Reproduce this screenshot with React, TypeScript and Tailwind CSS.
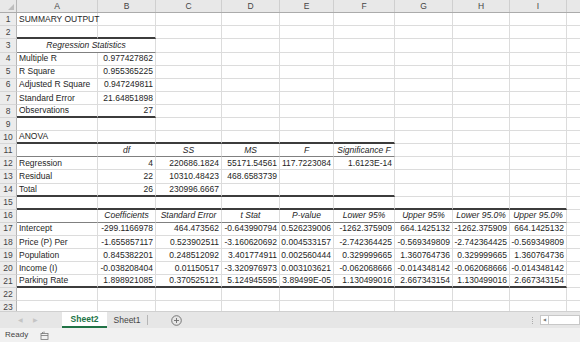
type Line = "thick" | "thin";

interface RowDef {
    cells: string[];
    hdr?: boolean;
    merge?: boolean;
    line?: [Line, number];
}

const colW = ["w-[81px]", "w-[58px]", "w-[66px]", "w-[58px]", "w-[54px]", "w-[61px]", "w-[58px]", "w-[57px]", "w-[57px]"];
const letters = ["A", "B", "C", "D", "E", "F", "G", "H", "I"];

const rows: RowDef[] = [
    { cells: ["SUMMARY OUTPUT"] },
    { cells: [], line: ["thick", 2] },
    { cells: ["Regression Statistics"], hdr: true, merge: true, line: ["thin", 2] },
    { cells: ["Multiple R", "0.977427862"] },
    { cells: ["R Square", "0.955365225"] },
    { cells: ["Adjusted R Square", "0.947249811"] },
    { cells: ["Standard Error", "21.64851898"] },
    { cells: ["Observations", "27"], line: ["thick", 2] },
    { cells: [] },
    { cells: ["ANOVA"], line: ["thick", 6] },
    { cells: ["", "df", "SS", "MS", "F", "Significance F"], hdr: true, line: ["thin", 6] },
    { cells: ["Regression", "4", "220686.1824", "55171.54561", "117.7223084", "1.6123E-14"] },
    { cells: ["Residual", "22", "10310.48423", "468.6583739"] },
    { cells: ["Total", "26", "230996.6667"], line: ["thick", 6] },
    { cells: [], line: ["thick", 9] },
    { cells: ["", "Coefficients", "Standard Error", "t Stat", "P-value", "Lower 95%", "Upper 95%", "Lower 95.0%", "Upper 95.0%"], hdr: true, line: ["thin", 9] },
    { cells: ["Intercept", "-299.1166978", "464.473562", "-0.643990794", "0.526239006", "-1262.375909", "664.1425132", "-1262.375909", "664.1425132"] },
    { cells: ["Price (P) Per", "-1.655857117", "0.523902511", "-3.160620692", "0.004533157", "-2.742364425", "-0.569349809", "-2.742364425", "-0.569349809"] },
    { cells: ["Population", "0.845382201", "0.248512092", "3.401774911", "0.002560444", "0.329999665", "1.360764736", "0.329999665", "1.360764736"] },
    { cells: ["Income (I)", "-0.038208404", "0.01150517", "-3.320976973", "0.003103621", "-0.062068666", "-0.014348142", "-0.062068666", "-0.014348142"] },
    { cells: ["Parking Rate", "1.898921085", "0.370525121", "5.124945595", "3.89499E-05", "1.130499016", "2.667343154", "1.130499016", "2.667343154"], line: ["thick", 9] },
    { cells: [] },
    { cells: [] },
];

function bottom(row: RowDef, i: number) {
    if (row.line && i < row.line[1]) {
        return row.line[0] === "thick" ? "border-b-2 border-b-[#3c3c3c]" : "border-b border-b-[#808080]";
    }
    return "border-b border-b-[#dcdcdc]";
}

function Cell({ row, i }: { row: RowDef; i: number }) {
    const text = row.cells[i] ?? "";
    const align = row.hdr ? "justify-center italic" : i === 0 ? "justify-start" : "justify-end";
    return (
        <div className={`${colW[i]} shrink-0 flex items-center px-[2px] border-r border-r-[#dcdcdc] ${bottom(row, i)} ${align} whitespace-nowrap overflow-visible`}>
            {text}
        </div>
    );
}

function SheetRow({ row, n }: { row: RowDef; n: number }) {
    return (
        <div className="flex h-[13.1px] shrink-0">
            <div className="w-[17px] shrink-0 bg-[#ececec] border-r border-r-[#b5b5b5] border-b border-b-[#d6d6d6] flex items-center justify-center text-[#444]">
                {n}
            </div>
            {row.merge ? (
                <div className={`w-[139px] shrink-0 flex items-center justify-center italic border-r border-r-[#dcdcdc] ${bottom(row, 0)}`}>
                    {row.cells[0]}
                </div>
            ) : (
                <>
                    <Cell row={row} i={0} />
                    <Cell row={row} i={1} />
                </>
            )}
            {[2, 3, 4, 5, 6, 7, 8].map((i) => (
                <Cell key={i} row={row} i={i} />
            ))}
            <div className="flex-1 border-b border-b-[#dcdcdc]"></div>
        </div>
    );
}

export default function App() {
    return (
        <div className="w-[580px] h-[342px] bg-white flex flex-col overflow-hidden text-[8.5px] text-[#1e1e1e]" style={{ fontFamily: '"Liberation Sans", Arial, sans-serif' }}>
            <div className="h-[311px] flex flex-col overflow-hidden">
                <div className="flex h-[13.3px] shrink-0 bg-[#e8e8e8] border-b border-b-[#ababab] text-[#444]">
                    <div className="w-[17px] shrink-0 border-r border-r-[#b5b5b5] relative">
                        <div className="absolute right-[2px] bottom-[2px] w-0 h-0 border-l-[6px] border-l-transparent border-b-[6px] border-b-[#bdbdbd]"></div>
                    </div>
                    {letters.map((l, i) => (
                        <div key={l} className={`${colW[i]} shrink-0 flex items-center justify-center border-r border-r-[#cfcfcf]`}>
                            {l}
                        </div>
                    ))}
                    <div className="flex-1"></div>
                </div>
                {rows.map((r, idx) => (
                    <SheetRow key={idx} row={r} n={idx + 1} />
                ))}
            </div>
            <div className="h-[17px] shrink-0 bg-[#e6e6e6] border-t border-t-[#d0d0d0] flex items-stretch text-[8.5px]">
                <div className="w-[62px] flex items-center gap-[10px] pl-[18px] text-[#c4c4c4] text-[6px]">
                    <span>◀</span>
                    <span>▶</span>
                </div>
                <div className="w-[45px] bg-white border-b-2 border-b-[#217346] flex items-center justify-center font-bold text-[#217346]">
                    Sheet2
                </div>
                <div className="w-[40px] flex items-center justify-center text-[#444]">Sheet1</div>
                <div className="w-px my-[3px] bg-[#b5b5b5]"></div>
                <div className="w-[56px] flex items-center justify-center">
                    <svg width="11" height="11" viewBox="0 0 11 11" fill="none" stroke="#6a6a6a" strokeWidth="0.9">
                        <circle cx="5.5" cy="5.5" r="4.8" />
                        <path d="M5.5 3v5M3 5.5h5" />
                    </svg>
                </div>
                <div className="flex-1"></div>
                <div className="w-[12px] flex flex-col items-center justify-center gap-[1px]">
                    <span className="w-[1px] h-[1px] bg-[#aaa]"></span>
                    <span className="w-[1px] h-[1px] bg-[#aaa]"></span>
                    <span className="w-[1px] h-[1px] bg-[#aaa]"></span>
                    <span className="w-[1px] h-[1px] bg-[#aaa]"></span>
                </div>
                <div className="w-[40px] my-[3px] ml-[2px] bg-white border border-[#c8c8c8] flex items-center">
                    <div className="w-[8px] h-full border-r border-r-[#c8c8c8] flex items-center justify-center text-[4px] text-[#777]">◀</div>
                </div>
            </div>
            <div className="flex-1 bg-[#f1f1f1] flex items-center gap-[12px] pl-[5px] text-[#444] text-[8px]">
                <span>Ready</span>
                <svg width="9" height="9" viewBox="0 0 9 9" fill="none" stroke="#777" strokeWidth="0.8">
                    <rect x="1" y="2.5" width="7" height="6" />
                    <path d="M1 4.5h7M2.5 1v2M4 0.5v2" />
                </svg>
            </div>
        </div>
    );
}
